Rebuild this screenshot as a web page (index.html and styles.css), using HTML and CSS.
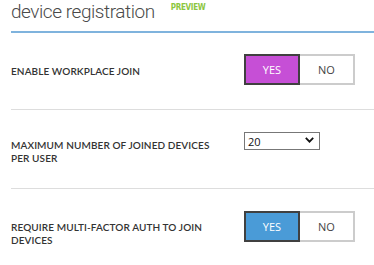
FILE: index.html
```html
<!DOCTYPE html>
<html lang="en">
<head>
    <meta charset="UTF-8">
    <title>device registration</title>
    <link rel="stylesheet" href="styles.css">
</head>
<body>
    <div class="header">
        <h1>device registration</h1>
        <span class="preview">PREVIEW</span>
    </div>

    <div class="row row-join">
        <div class="label">ENABLE WORKPLACE JOIN</div>
        <div class="toggle purple">
            <span class="opt on">YES</span>
            <span class="opt">NO</span>
        </div>
    </div>

    <div class="row row-max">
        <div class="label">MAXIMUM NUMBER OF JOINED DEVICES PER USER</div>
        <div class="select">
            <span>20</span>
            <svg width="9" height="6" viewBox="0 0 9 6"><polyline points="0.8,0.8 4.5,4.6 8.2,0.8" fill="none" stroke="#111" stroke-width="1.8"/></svg>
        </div>
    </div>

    <div class="row row-mfa">
        <div class="label">REQUIRE MULTI-FACTOR AUTH TO JOIN DEVICES</div>
        <div class="toggle blue">
            <span class="opt on">YES</span>
            <span class="opt">NO</span>
        </div>
    </div>
</body>
</html>
```

FILE: styles.css
```css
body {
    margin: 0;
    padding-left: 11px;
    font-family: "Open Sans", "Noto Sans", sans-serif;
    color: #333;
    background: #fff;
}
.header {
    display: flex;
    align-items: flex-start;
    height: 31px;
    border-bottom: 2px solid #7fb3dd;
}
h1 {
    margin: 0;
    font-family: Roboto, "Open Sans", sans-serif;
    font-size: 19px;
    font-weight: 300;
    letter-spacing: -0.45px;
    line-height: 24px;
    color: #4a4a4a;
}
.preview {
    margin-left: 16px;
    margin-top: 3px;
    font-family: "DejaVu Sans Condensed", "DejaVu Sans", sans-serif;
    font-stretch: condensed;
    font-size: 8px;
    font-weight: bold;
    letter-spacing: -0.3px;
    color: #8cc63f;
}
.row {
    display: flex;
    align-items: flex-start;
    border-bottom: 1px solid #ddd;
}
.label {
    width: 215px;
    margin-right: 18px;
    font-family: Lato, "Open Sans", sans-serif;
    font-size: 10px;
    font-weight: 600;
    letter-spacing: 0.1px;
    line-height: 13px;
    color: #333;
}
.row-join {
    height: 77px;
    padding-top: 21px;
    box-sizing: border-box;
}
.row-join .label {
    margin-top: 11px;
}
.row-max {
    height: 79px;
    padding-top: 22px;
    box-sizing: border-box;
}
.row-max .label {
    margin-top: 7px;
}
.row-mfa {
    border-bottom: none;
    padding-top: 22px;
}
.row-mfa .label {
    margin-top: 10px;
}
.toggle {
    display: flex;
}
.opt {
    display: flex;
    align-items: center;
    justify-content: center;
    width: 53px;
    height: 27px;
    border: 2px solid #ccc;
    border-left: none;
    font-size: 11px;
    color: #444;
}
.opt.on {
    width: 52px;
    border: 2px solid #404040;
    color: #fff;
}
.purple .on {
    background: #c64fd6;
}
.blue .on {
    background: #4a9bd7;
}
.select {
    display: flex;
    align-items: center;
    justify-content: space-between;
    width: 66px;
    height: 16px;
    padding: 0 5px 0 3px;
    border: 1px solid #777;
    font-size: 11px;
    color: #111;
}
.select svg {
    margin-bottom: 2px;
}
```
